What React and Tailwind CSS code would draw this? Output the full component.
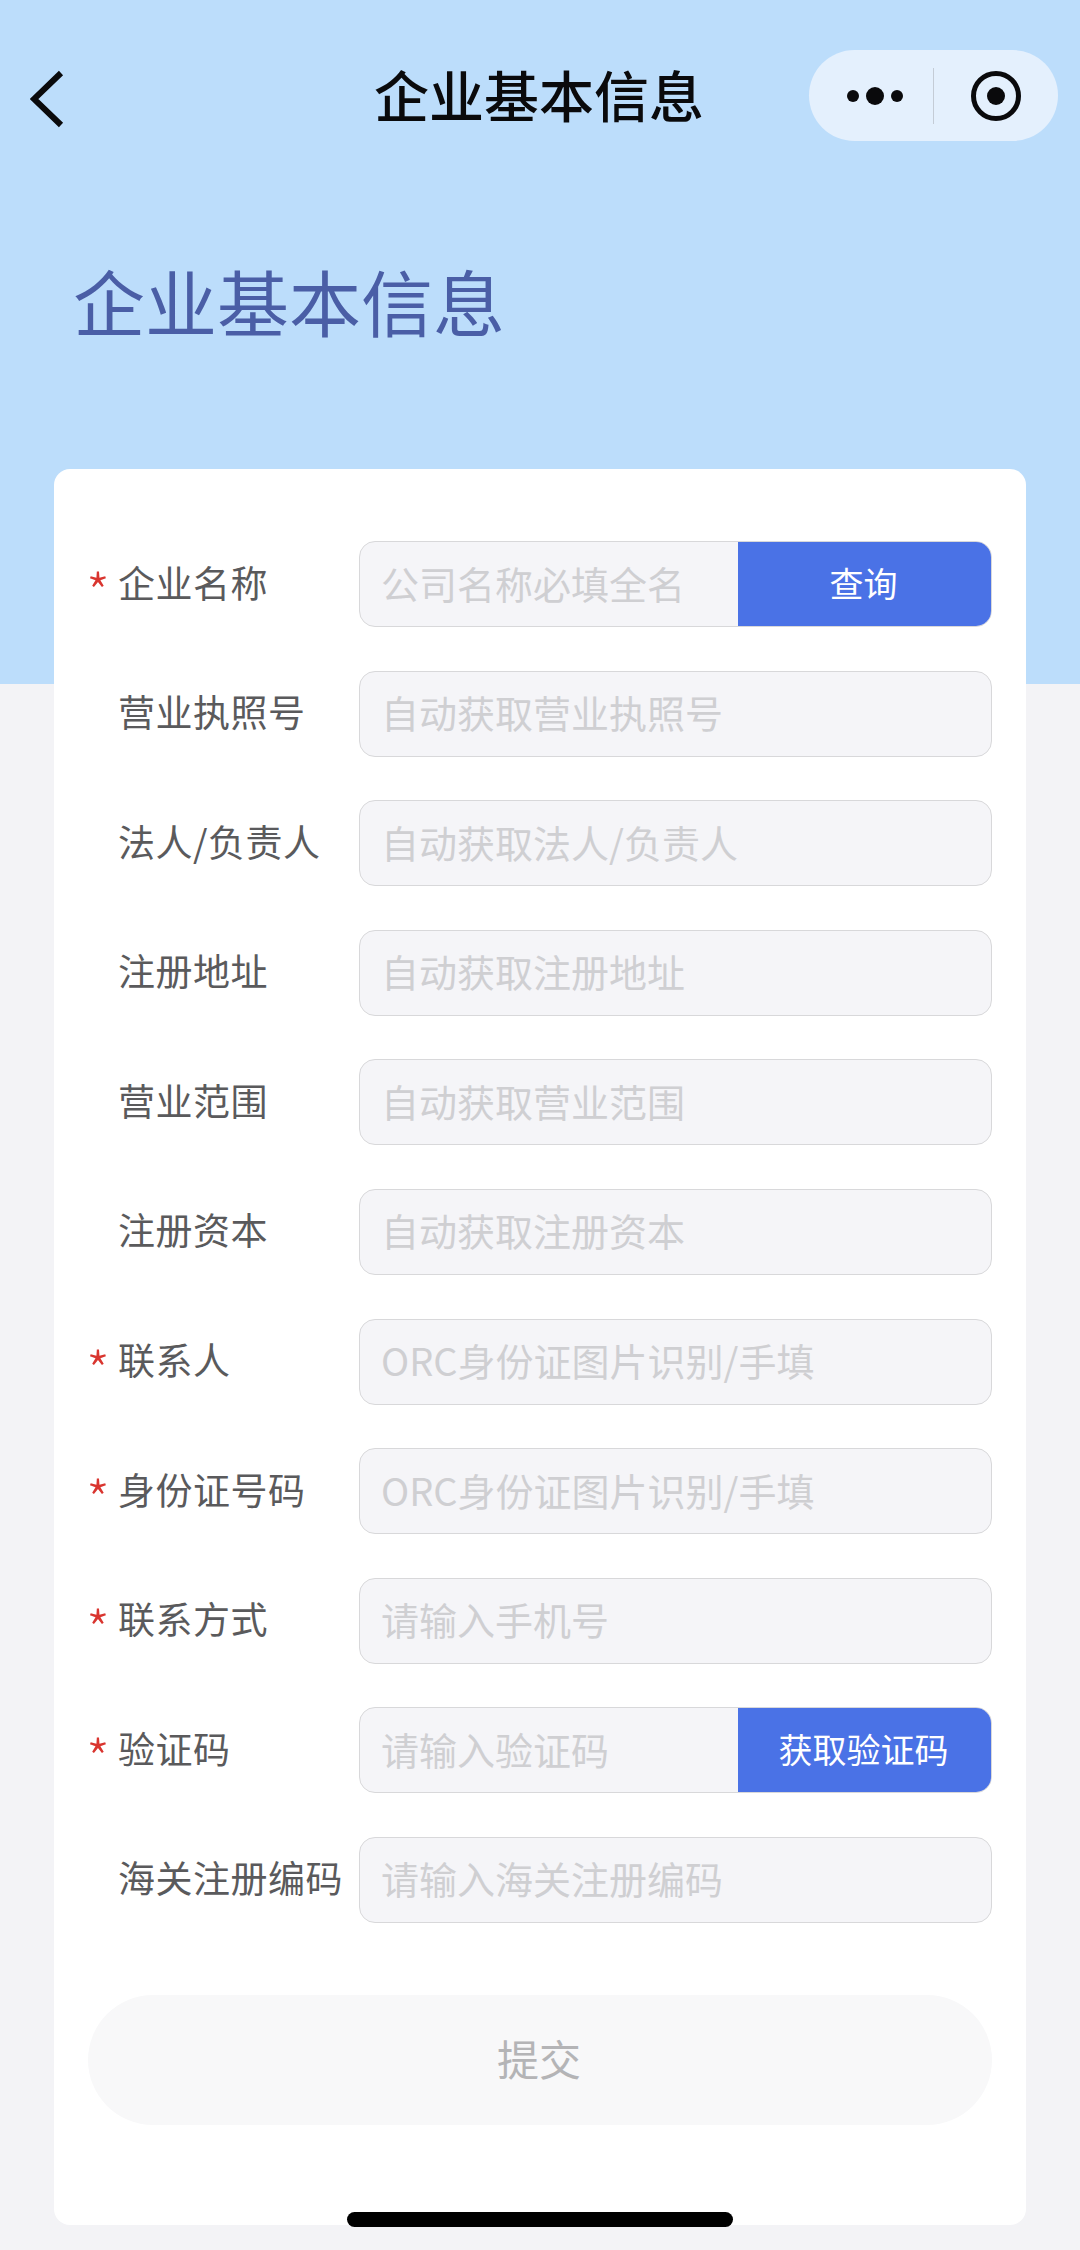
import React from 'react';

const rows = [
    { label: '企业名称', placeholder: '公司名称必填全名', required: true, action: '查询' },
    { label: '营业执照号', placeholder: '自动获取营业执照号' },
    { label: '法人/负责人', placeholder: '自动获取法人/负责人' },
    { label: '注册地址', placeholder: '自动获取注册地址' },
    { label: '营业范围', placeholder: '自动获取营业范围' },
    { label: '注册资本', placeholder: '自动获取注册资本' },
    { label: '联系人', placeholder: 'ORC身份证图片识别/手填', required: true },
    { label: '身份证号码', placeholder: 'ORC身份证图片识别/手填', required: true },
    { label: '联系方式', placeholder: '请输入手机号', required: true },
    { label: '验证码', placeholder: '请输入验证码', required: true, action: '获取验证码' },
    { label: '海关注册编码', placeholder: '请输入海关注册编码' },
];

const FormRow = ({ label, placeholder, required, action }) => (
    <div className="flex items-center h-[86px]">
        <div className="w-[32px] shrink-0 text-[#d9352f] text-[54px] leading-none pt-[14px] -ml-[2px] font-light">
            {required ? '*' : ''}
        </div>
        <div className="w-[241px] shrink-0 text-[37px] leading-none tracking-[0.5px] text-[#5a5a5c] whitespace-nowrap -mt-[4px]">
            {label}
        </div>
        <div className="flex-1 h-full flex items-stretch bg-[#f5f5f8] border border-[#d8d8da] rounded-[16px] overflow-hidden">
            <div className="flex-1 pl-[21px] pb-[3px] flex items-center text-[38px] leading-none text-[#cfcfd2] whitespace-nowrap">
                {placeholder}
            </div>
            {action && (
                <div className="w-[253px] pb-[2px] pr-[2px] flex items-center justify-center bg-[#4a72e6] text-white text-[34px] leading-none">
                    {action}
                </div>
            )}
        </div>
    </div>
);

const App = () => {
    return (
        <div
            className="relative w-[1080px] h-[2250px] overflow-hidden bg-[linear-gradient(#bcddfb_684px,#f3f3f6_684px)]"
            style={{ fontFamily: '"Noto Sans CJK SC", sans-serif' }}
        >
            {/* Nav bar */}
            <div className="flex items-center pt-[50px] pl-[30px] pr-[22px]">
                <svg className="mt-[6px]" width="34" height="58" viewBox="0 0 34 58" fill="none">
                    <path d="M31 3 L4 29 L31 55" stroke="#0a0a0c" strokeWidth="6" strokeLinejoin="miter" />
                </svg>
                <div className="text-[55px] leading-none font-medium text-[#0a0a0c] ml-[310px] -mt-[4px]">企业基本信息</div>
                <div className="ml-auto w-[249px] h-[91px] rounded-full bg-[#e4f0fd] flex items-center">
                    <div className="w-[124px] flex items-center gap-[7px] pl-[38px]">
                        <span className="w-[12px] h-[12px] rounded-full bg-[#0a0a0c]" />
                        <span className="w-[18px] h-[18px] rounded-full bg-[#0a0a0c]" />
                        <span className="w-[12px] h-[12px] rounded-full bg-[#0a0a0c]" />
                    </div>
                    <div className="w-px h-[56px] bg-[#c4ccd6]" />
                    <div className="flex-1 flex items-center justify-center">
                        <svg width="50" height="50" viewBox="0 0 50 50" fill="none">
                            <circle cx="25" cy="25" r="22.5" stroke="#0a0a0c" strokeWidth="5" />
                            <circle cx="25" cy="25" r="9" fill="#0a0a0c" />
                        </svg>
                    </div>
                </div>
            </div>

            <h1 className="pl-[73px] mt-[123px] text-[72px] leading-[72px] font-normal text-[#4a5ea6]">企业基本信息</h1>

            {/* Form card */}
            <div className="mx-[54px] mt-[133px] h-[1756px] bg-white rounded-[16px] pl-[34px] pr-[34px] pt-[72px]">
                <div className="flex flex-col gap-[43.6px]">
                    {rows.map((row) => (
                        <FormRow key={row.label} {...row} />
                    ))}
                </div>
                <div className="mt-[72px] h-[130px] pb-[4px] pr-[2px] rounded-full bg-[#f8f8f9] flex items-center justify-center text-[42px] leading-none text-[#b4b4b6]">
                    提交
                </div>
            </div>

            {/* Home indicator */}
            <div className="absolute left-[347px] top-[2212px] w-[386px] h-[15px] rounded-full bg-black" />
        </div>
    );
};

export default App;
